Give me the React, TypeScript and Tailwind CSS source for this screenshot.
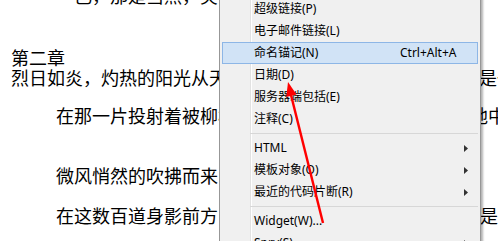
import React from "react";

type Item =
  | { kind: "item"; label: string; shortcut?: string; sub?: boolean; active?: boolean }
  | { kind: "sep" };

const items: Item[] = [
  { kind: "item", label: "超级链接(P)" },
  { kind: "item", label: "电子邮件链接(L)" },
  { kind: "item", label: "命名锚记(N)", shortcut: "Ctrl+Alt+A", active: true },
  { kind: "item", label: "日期(D)" },
  { kind: "item", label: "服务器端包括(E)" },
  { kind: "item", label: "注释(C)" },
  { kind: "sep" },
  { kind: "item", label: "HTML", sub: true },
  { kind: "item", label: "模板对象(O)", sub: true },
  { kind: "item", label: "最近的代码片断(R)", sub: true },
  { kind: "sep" },
  { kind: "item", label: "Widget(W)..." },
  { kind: "item", label: "Spry(S)", sub: true },
];

function SubArrow() {
  return (
    <svg width="4" height="7" viewBox="0 0 4 7" className="block">
      <polygon points="0,0 4,3.5 0,7" fill="#333333" />
    </svg>
  );
}

export default function App() {
  return (
    <div className="relative w-[498px] h-[241px] overflow-hidden bg-white">
      <div className="flex h-full">
        <div className="w-[3px] h-full bg-[#ececec]" />
        <div className="w-px h-full bg-[#a0a0a0]" />
        <div
          className="flex-1 pl-[11px] text-[18px] leading-[20px] text-black whitespace-nowrap"
          style={{ fontFamily: '"Noto Sans CJK SC", "Noto Sans", sans-serif' }}
        >
          <div className="mt-[-15px] pl-[45px]">　己，那是当然，笑意盈盈。</div>
          <div className="mt-[42px]">第二章</div>
          <div>烈日如炎，灼热的阳光从天空上倾泻而下，让得这片广场像是一座火炉一般。</div>
          <div className="mt-[18px] pl-[45px]">
            在那一片投射着被柳树枝叶切碎的斑驳光影的空旷场地中央，
          </div>
          <div className="mt-[40px] pl-[45px]">微风悄然的吹拂而来，带起阵阵树叶摩擦之声。</div>
          <div className="mt-[20px] pl-[45px]">
            在这数百道身影前方，一座高约3丈的石台之上，不知是否有人……
          </div>
        </div>
      </div>

      {/* context menu */}
      <div
        className="absolute left-[219px] top-[-5px] w-[262px] border border-[#979797] bg-[#f0f0f0] p-[2px] shadow-[2px_2px_2px_rgba(0,0,0,0.3)] text-[12px] text-black"
        style={{ fontFamily: '"Noto Sans", "Noto Sans CJK SC", sans-serif' }}
      >
        <div className="relative">
          <div className="absolute left-[28px] top-0 bottom-0 w-px bg-[#e2e2e2]" />
          <div className="absolute left-[29px] top-0 bottom-0 w-px bg-white" />
          {items.map((it, i) =>
            it.kind === "sep" ? (
              <div key={i} className="relative h-[7px] pl-[28px] flex flex-col justify-center">
                <div className="h-px bg-[#d7d7d7]" />
              </div>
            ) : (
              <div
                key={i}
                className={
                  "relative flex items-center h-[22px] " +
                  (it.active
                    ? "bg-[#d1e3f6] border border-[#8db6e6] pl-[31px] pr-[9px]"
                    : "pl-[32px] pr-[10px]")
                }
              >
                <span className="w-[146px] leading-[22px]">{it.label}</span>
                {it.shortcut && <span className="leading-[22px]">{it.shortcut}</span>}
                {it.sub && (
                  <span className="ml-auto">
                    <SubArrow />
                  </span>
                )}
              </div>
            )
          )}
        </div>
      </div>

      {/* red annotation arrow */}
      <svg
        className="absolute left-0 top-0 pointer-events-none"
        width="498"
        height="241"
        viewBox="0 0 498 241"
      >
        <line x1="323" y1="223" x2="291" y2="95" stroke="#ff0000" strokeWidth="2.5" />
        <polygon points="288,82 296.5,94.5 286.3,97" fill="#ff0000" />
      </svg>
    </div>
  );
}
